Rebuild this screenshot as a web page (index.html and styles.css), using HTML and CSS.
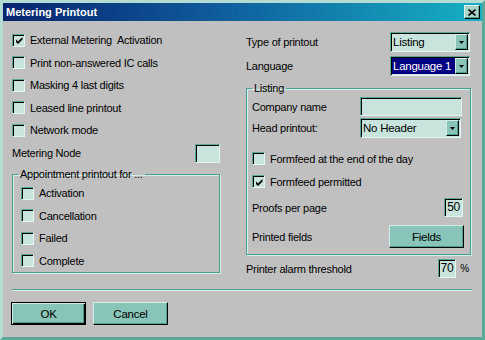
FILE: index.html
```html
<!DOCTYPE html>
<html lang="en">
<head>
  <meta charset="UTF-8">
  <title>Metering Printout</title>
  <link rel="stylesheet" href="styles.css">
</head>
<body>
  <div class="window">
    <div class="titlebar">
      <span class="title">Metering Printout</span>
      <span class="close">
        <svg width="8" height="7" viewBox="0 0 8 7"><path d="M0.5 0.5 L7.5 6.5 M7.5 0.5 L0.5 6.5" stroke="#000" stroke-width="1.6"/></svg>
      </span>
    </div>

    <div class="content">
      <div class="col-left">
        <label class="check"><span class="box"><svg width="7" height="7" viewBox="0 0 7 7"><polygon points="0,2.5 2,4.5 6.5,0 6.5,2.5 2,7 0,5" fill="#000"/></svg></span>External Metering&nbsp; Activation</label>
        <label class="check"><span class="box"></span>Print non-answered IC calls</label>
        <label class="check"><span class="box"></span>Masking 4 last digits</label>
        <label class="check"><span class="box"></span>Leased line printout</label>
        <label class="check"><span class="box"></span>Network mode</label>
        <div class="node-row">
          <span>Metering Node</span>
          <span class="edit node"></span>
        </div>
        <fieldset class="group appt">
          <legend>Appointment printout for ...</legend>
          <label class="check"><span class="box"></span>Activation</label>
          <label class="check"><span class="box"></span>Cancellation</label>
          <label class="check"><span class="box"></span>Failed</label>
          <label class="check"><span class="box"></span>Complete</label>
        </fieldset>
      </div>

      <div class="col-right">
        <div class="row row-type">
          <span>Type of printout</span>
          <span class="combo top-combo"><span class="combo-text">Listing</span><span class="drop"><svg width="5" height="3" viewBox="0 0 5 3"><polygon points="0,0 5,0 2.5,3" fill="#000"/></svg></span></span>
        </div>
        <div class="row row-lang">
          <span>Language</span>
          <span class="combo top-combo selected"><span class="combo-text">Language 1</span><span class="drop"><svg width="5" height="3" viewBox="0 0 5 3"><polygon points="0,0 5,0 2.5,3" fill="#000"/></svg></span></span>
        </div>

        <fieldset class="group listing">
          <legend>Listing</legend>
          <div class="row row-company">
            <span class="lbl">Company name</span>
            <span class="edit company"></span>
          </div>
          <div class="row row-head">
            <span class="lbl">Head printout:</span>
            <span class="combo head-combo"><span class="combo-text">No Header</span><span class="drop"><svg width="5" height="3" viewBox="0 0 5 3"><polygon points="0,0 5,0 2.5,3" fill="#000"/></svg></span></span>
          </div>
          <label class="check tall first"><span class="box"></span>Formfeed at the end of the day</label>
          <label class="check tall"><span class="box"><svg width="7" height="7" viewBox="0 0 7 7"><polygon points="0,2.5 2,4.5 6.5,0 6.5,2.5 2,7 0,5" fill="#000"/></svg></span>Formfeed permitted</label>
          <div class="row row-proofs">
            <span>Proofs per page</span>
            <span class="edit num proofs">50</span>
          </div>
          <div class="row row-fields">
            <span>Printed fields</span>
            <button class="btn fields-btn">Fields</button>
          </div>
        </fieldset>

        <div class="row row-alarm">
          <span>Printer alarm threshold</span>
          <span class="alarm">
            <span class="edit num threshold">70</span>
            <span class="pct">%</span>
          </span>
        </div>
      </div>
    </div>

    <div class="separator"></div>

    <div class="buttons">
      <button class="btn default">OK</button>
      <button class="btn">Cancel</button>
    </div>
  </div>
</body>
</html>
```

FILE: styles.css
```css
body {
  margin: 0;
  background-color: #c0c0c0;
  font-family: "Liberation Sans", Arial, sans-serif;
  font-size: 11px;
  letter-spacing: -0.25px;
  color: #000;
}

.window {
  width: 485px;
  height: 340px;
  box-sizing: border-box;
  border: 3px solid;
  border-color: #b4dcd2 #5aa898 #5aa898 #b4dcd2;
  background-color: #c0c0c0;
}

.titlebar {
  height: 18px;
  display: flex;
  align-items: center;
  justify-content: space-between;
  padding: 0 2px 0 3px;
  background: linear-gradient(to right, #08236e, #0f5c9c 45%, #16b0c4);
  color: #fff;
}

.title {
  font-weight: bold;
  letter-spacing: 0;
}

.close {
  width: 16px;
  height: 14px;
  box-sizing: border-box;
  display: flex;
  align-items: center;
  justify-content: center;
  background-color: #a8d4ca;
  border: 1px solid;
  border-color: #e4f4f0 #000 #000 #e4f4f0;
  box-shadow: inset -1px -1px 0 #5aa898;
}

.content {
  display: flex;
  align-items: flex-start;
  padding: 8px 0 0 9px;
}

.col-left {
  width: 208px;
}

.col-right {
  width: 225px;
  margin-left: 26px;
}

/* checkboxes */
.check {
  display: flex;
  align-items: center;
  height: 22.5px;
}

.check.tall {
  height: 23px;
}

.check.first {
  margin-top: 9px;
}

.box {
  width: 13px;
  height: 13px;
  box-sizing: border-box;
  margin-right: 5px;
  display: flex;
  align-items: center;
  justify-content: center;
  background-color: #c8e4dc;
  border: 1px solid;
  border-color: #5aa898 #e4f4f0 #e4f4f0 #5aa898;
  box-shadow: inset 1px 1px 0 #000;
}

.box svg {
  margin: 1px 0 0 1px;
}

/* edit fields */
.edit {
  display: block;
  box-sizing: border-box;
  background-color: #c8e4dc;
  border: 1px solid;
  border-color: #5aa898 #e4f4f0 #e4f4f0 #5aa898;
  box-shadow: inset 1px 1px 0 #000;
}

.edit.num {
  text-align: right;
  padding-right: 2px;
  line-height: 17px;
  font-size: 12px;
}

.node-row {
  display: flex;
  align-items: center;
  justify-content: space-between;
  height: 23px;
}

.node {
  width: 25px;
  height: 19px;
}

/* group boxes */
.group {
  margin: 0;
  border: 1px solid #4a9e8e;
  box-shadow: inset 1px 1px 0 #d4eee8, 1px 1px 0 #d4eee8;
}

.group legend {
  padding: 0 2px;
  line-height: 12px;
}

.appt {
  margin-top: 3.5px;
  padding: 2px 0 0 8px;
}

.appt legend {
  margin-left: -3px;
}

.listing {
  margin-top: 6px;
  padding: 0 7px 6px 5px;
}

/* right column rows */
.row {
  display: flex;
  align-items: center;
  justify-content: space-between;
}

.row-type {
  margin-top: 3px;
  height: 20px;
}

.row-lang {
  margin-top: 4px;
  height: 20px;
}

.lbl {
  width: 108px;
}

.row-company {
  margin-top: 3px;
  height: 19px;
}

.company {
  width: 102px;
  height: 19px;
  margin-right: 1px;
}

.row-head {
  margin-top: 2px;
  height: 20px;
}

.row-proofs {
  margin-top: 5px;
  height: 19px;
}

.proofs {
  width: 19px;
  height: 19px;
}

.row-fields {
  margin-top: 8px;
  height: 23px;
}

.fields-btn {
  margin-right: -1px;
}

.row-alarm {
  margin-top: 4px;
  height: 19px;
}

.alarm {
  display: flex;
  align-items: center;
}

.threshold {
  width: 18px;
  height: 19px;
}

.pct {
  margin: 0 2px 0 4px;
  font-size: 10px;
}

/* combo boxes */
.combo {
  display: flex;
  box-sizing: border-box;
  height: 20px;
  padding: 2px;
  background-color: #c8e4dc;
  border: 0;
  box-shadow: inset 1px 1px 0 #5aa898, inset -1px -1px 0 #e4f4f0, inset 2px 2px 0 #000, inset -2px -2px 0 #c8e4dc;
}

.top-combo {
  width: 80px;
  margin-right: 1px;
}

.head-combo {
  width: 101px;
  margin-right: 2px;
}

.combo-text {
  flex: 1;
  padding-left: 1px;
  line-height: 16px;
  font-size: 11.5px;
}

.combo.selected .combo-text {
  background-color: #000080;
  color: #fff;
}

.drop {
  width: 13px;
  height: 16px;
  box-sizing: border-box;
  display: flex;
  align-items: center;
  justify-content: center;
  background-color: #88c4b8;
  border: 1px solid;
  border-color: #d4ece6 #000 #000 #d4ece6;
  box-shadow: inset -1px -1px 0 #4a9e8e;
}

/* bottom */
.separator {
  width: 460px;
  margin: 11px 0 0 9px;
  border-top: 1px solid #4a9e8e;
  border-bottom: 1px solid #d4eee8;
}

.buttons {
  display: flex;
  gap: 7px;
  margin: 11px 0 0 8px;
}

.btn {
  width: 75px;
  height: 23px;
  box-sizing: border-box;
  padding: 0;
  font-family: inherit;
  font-size: 11.5px;
  letter-spacing: -0.25px;
  color: #000;
  background-color: #88c4b8;
  border: 1px solid;
  border-color: #d4ece6 #000 #000 #d4ece6;
  box-shadow: inset -1px -1px 0 #4a9e8e;
  cursor: pointer;
}

.btn.default {
  border-color: #000;
  box-shadow: inset 1px 1px 0 #d4ece6, inset -1px -1px 0 #000, inset -2px -2px 0 #4a9e8e;
}
```
